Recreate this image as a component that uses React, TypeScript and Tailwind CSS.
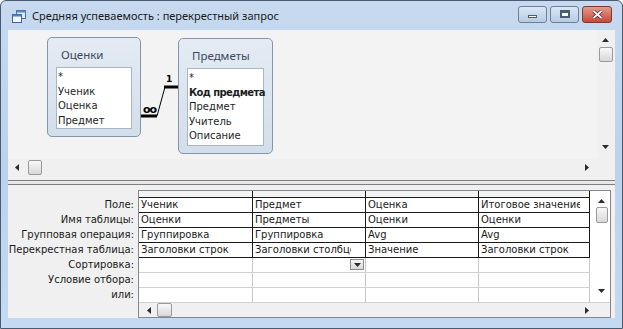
import React from 'react';

const labels = ['Поле:', 'Имя таблицы:', 'Групповая операция:', 'Перекрестная таблица:', 'Сортировка:', 'Условие отбора:', 'или:'];

const rows = [
    ['Ученик', 'Предмет', 'Оценка', 'Итоговое значение'],
    ['Оценки', 'Предметы', 'Оценки', 'Оценки'],
    ['Группировка', 'Группировка', 'Avg', 'Avg'],
    ['Заголовки строк', 'Заголовки столбцов', 'Значение', 'Заголовки строк'],
    ['', '', '', ''],
    ['', '', '', ''],
    ['', '', '', ''],
];

const colW = ['w-[114px]', 'w-[113px]', 'w-[113px]', 'w-[111px]'];

function Arrow({ dir }: { dir: 'up' | 'down' | 'left' | 'right' }) {
    const pts = {
        up: '0,4 3.5,0 7,4',
        down: '0,0 3.5,4 7,0',
        left: '4,0 0,3.5 4,7',
        right: '0,0 4,3.5 0,7',
    }[dir];
    const vertical = dir === 'up' || dir === 'down';
    return (
        <svg width={vertical ? 7 : 4} height={vertical ? 4 : 7}>
            <polygon points={pts} fill="#2b2b2b" />
        </svg>
    );
}

function Thumb({ className }: { className: string }) {
    return <div className={`rounded-[2px] border border-[#9a9a9a] bg-gradient-to-b from-[#f8f8f8] to-[#d8d8d8] ${className}`} />;
}

function TableBox({ title, fields, boldIndex, className, listH }: { title: string; fields: string[]; boldIndex?: number; className: string; listH: string }) {
    return (
        <div className={`absolute rounded-[5px] border border-[#8496ad] bg-gradient-to-b from-[#e4ebf4] to-[#d3deeb] ${className}`}>
            <div className="h-[29px] pl-[13px] pt-[10px] text-[11.5px] leading-[14px] text-[#3b4a5e]" style={{ fontFamily: '"Noto Sans", sans-serif' }}>
                {title}
            </div>
            <div className={`mx-[8px] border border-[#a9b6c6] bg-white pl-[1px] pt-[2px] ${listH}`}>
                {fields.map((f, i) => (
                    <div key={f} className={`h-[14.5px] whitespace-nowrap text-[10px] leading-[14px] text-[#1e1e1e] ${i === boldIndex ? 'font-bold tracking-[-0.6px]' : ''}`}>
                        {f}
                    </div>
                ))}
            </div>
        </div>
    );
}

export default function App() {
    return (
        <div className="w-[623px] h-[329px] overflow-hidden bg-white" style={{ fontFamily: '"DejaVu Sans", sans-serif' }}>
            <div className="flex h-[329px] w-[623px] flex-col rounded-t-[6px] border border-[#4a5b70] bg-gradient-to-b from-[#c6d9ef] via-[#bcd2ec] to-[#c4daf2]">
                {/* title bar */}
                <div className="flex h-[29px] items-center pl-[11px] pr-[10px]">
                    <svg width="14" height="13" viewBox="0 0 14 13" className="mt-[2px]">
                        <rect x="4.5" y="0.5" width="9" height="8" fill="#dfeaf7" stroke="#4a6fa5" />
                        <rect x="4.5" y="0.5" width="9" height="2" fill="#5a86c4" />
                        <rect x="0.5" y="4.5" width="9" height="8" fill="#f4f8fc" stroke="#3d63a0" />
                        <rect x="0.5" y="4.5" width="9" height="2" fill="#4f7dc0" />
                    </svg>
                    <div className="ml-[6px] mt-[1px] text-[11px] text-[#1a1a1a]" style={{ fontFamily: '"Noto Sans", sans-serif' }}>
                        Средняя успеваемость : перекрестный запрос
                    </div>
                    <div className="ml-auto mt-[-3px] flex gap-[3px]">
                        <div className="flex h-[17px] w-[29px] items-center justify-center rounded-[3px] border border-[#6d7f96] bg-gradient-to-b from-[#dbe7f5] to-[#b6cbe4]">
                            <div className="mt-[5px] h-[3px] w-[9px] border border-[#4c5d72] bg-white" />
                        </div>
                        <div className="flex h-[17px] w-[29px] items-center justify-center rounded-[3px] border border-[#6d7f96] bg-gradient-to-b from-[#dbe7f5] to-[#b6cbe4]">
                            <div className="h-[8px] w-[10px] border-2 border-t-[3px] border-[#4c5d72] bg-white" />
                        </div>
                        <div className="flex h-[17px] w-[30px] items-center justify-center rounded-[3px] border border-[#7a3a32] bg-gradient-to-b from-[#e29a8d] to-[#c5483a]">
                            <svg width="11" height="9" viewBox="0 0 11 9">
                                <path d="M1.5 1 L9.5 8 M9.5 1 L1.5 8" stroke="#4a1c18" strokeWidth="3.2" />
                                <path d="M1.5 1 L9.5 8 M9.5 1 L1.5 8" stroke="#ffffff" strokeWidth="1.8" />
                            </svg>
                        </div>
                    </div>
                </div>

                {/* client */}
                <div className="mx-[7px] flex h-[288px] flex-col bg-[#f0f0f0]">
                    {/* upper pane */}
                    <div className="flex h-[129px]">
                        <div className="relative h-[129px] w-[589px] bg-[#f3f3f3]">
                            <TableBox title="Оценки" fields={['*', 'Ученик', 'Оценка', 'Предмет']} className="left-[39px] top-[7px] h-[100px] w-[94px]" listH="h-[62px]" />
                            <TableBox title="Предметы" fields={['*', 'Код предмета', 'Предмет', 'Учитель', 'Описание']} boldIndex={1} className="left-[170px] top-[8px] h-[116px] w-[95px]" listH="h-[78px]" />
                            <svg className="absolute left-0 top-0" width="589" height="129">
                                <line x1="133" y1="86" x2="149" y2="86" stroke="#000" strokeWidth="3" />
                                <line x1="149" y1="86" x2="157" y2="57" stroke="#000" strokeWidth="1" />
                                <line x1="156" y1="57" x2="170" y2="57" stroke="#000" strokeWidth="3" />
                            </svg>
                            <div className="absolute left-[135px] top-[74px] text-[11px] font-bold leading-[12px] tracking-[-1px]">oo</div>
                            <div className="absolute left-[158px] top-[44px] text-[9px] font-bold leading-[10px]">1</div>
                        </div>
                        <div className="flex w-[17px] flex-col items-center bg-[#f0f0f0] pt-[8px]">
                            <Arrow dir="up" />
                            <Thumb className="mt-[5px] h-[15px] w-[14px]" />
                            <div className="mt-auto mb-[10px]">
                                <Arrow dir="down" />
                            </div>
                        </div>
                    </div>
                    <div className="flex h-[17px] items-center bg-[#f0f0f0]">
                        <div className="ml-[7px]">
                            <Arrow dir="left" />
                        </div>
                        <Thumb className="ml-[9px] h-[15px] w-[14px]" />
                        <div className="ml-auto mr-[26px]">
                            <Arrow dir="right" />
                        </div>
                    </div>

                    {/* splitter */}
                    <div className="mt-[4px] h-[5px] border-y border-[#7f7f7f] bg-[#e8e8e8]" />
                    <div className="h-[5px]" />

                    {/* lower pane */}
                    <div className="flex h-[128px]">
                        <div className="w-[130px] pt-[7px] pr-[4px] text-right text-[10px] text-[#1a1a1a]">
                            {labels.map((l) => (
                                <div key={l} className="h-[15px] whitespace-nowrap leading-[15px]">{l}</div>
                            ))}
                        </div>
                        <div className="flex h-[128px] w-[473px] flex-col border border-[#828790] bg-white">
                            <div className="flex">
                                <div className="w-[451px]">
                                    <div className="flex h-[6px] bg-[#f4f4f4]">
                                        {colW.map((w, i) => (
                                            <div key={i} className={`${w} border-r border-[#1a1a1a]`} />
                                        ))}
                                    </div>
                                    {rows.map((r, ri) => (
                                        <div key={ri} className={`flex h-[15px] border-t ${ri <= 4 ? 'border-[#1a1a1a]' : 'border-[#d0d0d0]'}`}>
                                            {r.map((c, ci) => (
                                                <div
                                                    key={ci}
                                                    className={`${colW[ci]} relative overflow-hidden whitespace-nowrap border-r pl-[2px] text-[10px] leading-[14px] text-[#1a1a1a] ${ri <= 3 ? 'border-[#1a1a1a]' : 'border-[#c8c8c8]'}`}
                                                >
                                                    {ci === 1 && ri === 3 ? (
                                                        <span className="block w-[96px] overflow-hidden">{c}</span>
                                                    ) : ci === 3 && ri === 0 ? (
                                                        <span className="block w-[99px] overflow-hidden">{c}</span>
                                                    ) : (
                                                        c
                                                    )}
                                                    {ci === 1 && ri === 4 && (
                                                        <div className="absolute right-[1px] top-[1px] flex h-[11px] w-[14px] items-center justify-center border border-[#8c8c8c] bg-gradient-to-b from-[#f6f6f6] to-[#d9d9d9]">
                                                            <Arrow dir="down" />
                                                        </div>
                                                    )}
                                                </div>
                                            ))}
                                        </div>
                                    ))}
                                </div>
                                <div className="flex w-[20px] flex-col items-center pt-[8px] pl-[3px]">
                                    <Arrow dir="up" />
                                    <Thumb className="mt-[4px] h-[16px] w-[12px]" />
                                    <div className="mt-[66px]">
                                        <Arrow dir="down" />
                                    </div>
                                </div>
                            </div>
                            <div className="flex h-[15px] items-center border-t border-[#d0d0d0] bg-[#f0f0f0]">
                                <div className="ml-[8px]">
                                    <Arrow dir="left" />
                                </div>
                                <Thumb className="ml-[6px] h-[14px] w-[15px]" />
                                <div className="ml-auto mr-[21px]">
                                    <Arrow dir="right" />
                                </div>
                            </div>
                        </div>
                    </div>
                </div>
            </div>
        </div>
    );
}
